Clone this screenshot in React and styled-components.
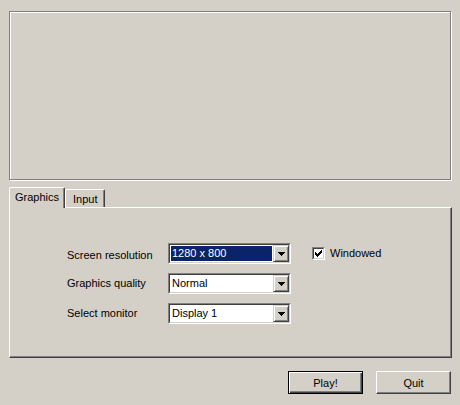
import React from "react";
import styled, { createGlobalStyle } from "styled-components";

const GlobalStyle = createGlobalStyle`
  html, body {
    margin: 0;
    padding: 0;
    background: #d4d0c8;
  }
  body {
    font-family: "Liberation Sans", Arial, sans-serif;
    font-size: 11px;
    color: #000;
  }
`;

const Window = styled.div`
  width: 460px;
  height: 405px;
  box-sizing: border-box;
  padding: 11px 8px 0 9px;
  display: flex;
  flex-direction: column;
  background: #d4d0c8;
`;

const Banner = styled.div`
  width: 442px;
  height: 169px;
  box-sizing: border-box;
  border: 1px solid #808080;
  box-shadow: inset 1px 1px 0 #fff, 1px 1px 0 #fff;
`;

const TabStrip = styled.div`
  display: flex;
  align-items: flex-end;
  margin-top: 7px;
`;

const Tab = styled.div`
  position: relative;
  box-sizing: border-box;
  padding: ${(p) => (p.$active ? "0 5px" : "3px 6px 0 7px")};
  height: ${(p) => (p.$active ? "21px" : "18px")};
  line-height: ${(p) => (p.$active ? "19px" : "13px")};
  margin-bottom: ${(p) => (p.$active ? "-1px" : "0")};
  z-index: ${(p) => (p.$active ? 1 : 0)};
  border-top: 1px solid #fff;
  border-left: 1px solid #fff;
  border-right: 1px solid #404040;
  border-radius: 2px 2px 0 0;
  box-shadow: inset -1px 0 0 #808080;
  background: #d4d0c8;
  white-space: nowrap;
`;

const Panel = styled.div`
  width: 443px;
  height: 151px;
  box-sizing: border-box;
  border: 1px solid;
  border-color: #fff #404040 #404040 #fff;
  box-shadow: inset -1px -1px 0 #808080;
  padding: 35px 0 0 57px;
  display: grid;
  grid-template-columns: 101px 123px auto;
  grid-auto-rows: 21px;
  row-gap: 9px;
  align-items: center;
  align-content: start;
`;

const Label = styled.div`
  white-space: nowrap;
  margin-top: ${(p) => p.$shift || 0}px;
`;

const Sunken = styled.div`
  box-sizing: border-box;
  border: 1px solid;
  border-color: #808080 #fff #fff #808080;
`;

const SunkenInner = styled.div`
  box-sizing: border-box;
  height: 100%;
  border: 1px solid;
  border-color: #404040 #d4d0c8 #d4d0c8 #404040;
  background: #fff;
  display: flex;
`;

const Combo = styled(Sunken)`
  width: 123px;
  height: 21px;
`;

const Field = styled.div`
  flex: 1;
  padding: 1px;
  display: flex;
`;

const Value = styled.span`
  flex: 1;
  padding-left: 1px;
  line-height: 15px;
  background: ${(p) => (p.$selected ? "#0a246a" : "transparent")};
  color: ${(p) => (p.$selected ? "#fff" : "#000")};
  white-space: nowrap;
`;

const DropButton = styled.div`
  width: 16px;
  box-sizing: border-box;
  border: 1px solid;
  border-color: #d4d0c8 #404040 #404040 #d4d0c8;
  box-shadow: inset 1px 1px 0 #fff, inset -1px -1px 0 #808080;
  background: #d4d0c8;
  display: flex;
  align-items: center;
  justify-content: center;
`;

const CheckCell = styled.label`
  display: flex;
  align-items: center;
  gap: 5px;
  margin-left: 21px;
  margin-top: -1px;
`;

const CheckBox = styled(Sunken)`
  width: 13px;
  height: 13px;
`;

const ButtonRow = styled.div`
  display: flex;
  justify-content: flex-end;
  gap: 13px;
  margin-top: 13px;
  margin-right: 1px;
`;

const Button = styled.button`
  width: 75px;
  height: 23px;
  box-sizing: border-box;
  padding: 0;
  font: inherit;
  color: #000;
  background: #d4d0c8;
  border: 1px solid;
  border-color: ${(p) => (p.$default ? "#000" : "#fff #404040 #404040 #fff")};
  box-shadow: ${(p) =>
    p.$default
      ? "inset 1px 1px 0 #fff, inset -1px -1px 0 #404040, inset -2px -2px 0 #808080"
      : "inset -1px -1px 0 #808080"};
`;

const Arrow = () => (
  <svg width="7" height="4" viewBox="0 0 7 4" shapeRendering="crispEdges">
    <path d="M0 0h7v1H0z M1 1h5v1H1z M2 2h3v1H2z M3 3h1v1H3z" fill="#000" />
  </svg>
);

const Tick = () => (
  <svg width="9" height="9" viewBox="0 0 9 9" shapeRendering="crispEdges">
    <path
      d="M7 1h1v1H7z M6 2h2v1H6z M1 3h1v1H1z M5 3h3v1H5z M1 4h2v1H1z M4 4h3v1H4z M1 5h5v1H1z M2 6h3v1H2z M3 7h1v1H3z"
      fill="#000"
    />
  </svg>
);

const Select = ({ value, selected }) => (
  <Combo>
    <SunkenInner>
      <Field>
        <Value $selected={selected}>{value}</Value>
      </Field>
      <DropButton>
        <Arrow />
      </DropButton>
    </SunkenInner>
  </Combo>
);

export default function App() {
  return (
    <>
      <GlobalStyle />
      <Window>
        <Banner />
        <TabStrip>
          <Tab $active>Graphics</Tab>
          <Tab>Input</Tab>
        </TabStrip>
        <Panel>
          <Label $shift={2}>Screen resolution</Label>
          <Select value="1280 x 800" selected />
          <CheckCell>
            <CheckBox>
              <SunkenInner>
                <Tick />
              </SunkenInner>
            </CheckBox>
            Windowed
          </CheckCell>

          <Label $shift={-1}>Graphics quality</Label>
          <Select value="Normal" />
          <span />

          <Label $shift={-2}>Select monitor</Label>
          <Select value="Display 1" />
        </Panel>
        <ButtonRow>
          <Button $default>Play!</Button>
          <Button>Quit</Button>
        </ButtonRow>
      </Window>
    </>
  );
}
